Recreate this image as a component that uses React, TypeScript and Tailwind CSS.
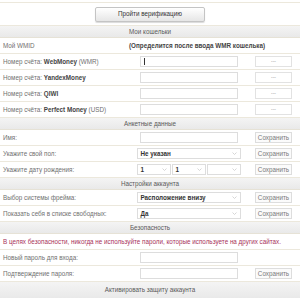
import type { ReactNode } from "react";

const font = { fontFamily: '"Liberation Sans", Arial, sans-serif' };

function Header({ children }: { children: ReactNode }) {
  return (
    <div className="flex h-[12px] items-center justify-center border-b border-[#e6e2d6] bg-gradient-to-b from-[#f4f4f4] to-[#e9e9e9] text-[6.3px] text-[#5a5a5a]">
      {children}
    </div>
  );
}

function Row({ label, children, right }: { label: ReactNode; children?: ReactNode; right?: ReactNode }) {
  return (
    <div className="flex h-[16px] items-center border-b border-[#ece8dc]">
      <div className="w-[135px] shrink-0 pl-[3px] text-[6.3px] whitespace-nowrap text-[#707070]">{label}</div>
      <div className="flex w-[107px] shrink-0 justify-center">{children}</div>
      <div className="ml-[13px] flex w-[37px] shrink-0 justify-center">{right}</div>
    </div>
  );
}

function Input({ caret }: { caret?: boolean }) {
  return (
    <div className="flex h-[11px] w-[98px] items-center border border-[#ddd] bg-white pl-[3px]">
      {caret && <div className="h-[7px] w-px bg-[#333]" />}
    </div>
  );
}

function Dash() {
  return (
    <div className="flex h-[11px] w-[37px] items-center justify-center border border-[#e2e2e2] bg-white text-[5px] text-[#999]">
      ---
    </div>
  );
}

function Save() {
  return (
    <div className="flex h-[11px] w-[37px] items-center justify-center border border-[#ddd] bg-[#fbfbfb] text-[6.3px] text-[#7a7a7a]">
      Сохранить
    </div>
  );
}

function Select({ value, w }: { value?: string; w: string }) {
  return (
    <div className={`flex h-[11px] ${w} items-center justify-between border border-[#ddd] bg-white px-[3px]`}>
      <span className="text-[6.3px] font-bold text-[#333]">{value}</span>
      <svg width="5" height="3" viewBox="0 0 5 3">
        <path d="M0.5 0.5 L2.5 2.5 L4.5 0.5" fill="none" stroke="#ccc" strokeWidth="0.8" />
      </svg>
    </div>
  );
}

export default function App() {
  return (
    <div className="h-[298px] w-[300px] overflow-hidden bg-white" style={font}>
      <div className="mt-[2px] flex h-[24px] items-center justify-center border-t border-b border-[#ece8dc]">
        <div className="flex h-[15px] w-[110px] items-center justify-center rounded-[2px] border border-[#c4c4c4] bg-gradient-to-b from-white to-[#e6e6e6] text-[6.3px] text-[#333] shadow-[0_1px_1px_rgba(0,0,0,0.15)]">
          Пройти верификацию
        </div>
      </div>

      <Header>Мои кошельки</Header>
      <div className="flex h-[16px] items-center border-b border-[#ece8dc] text-[6.3px]">
        <div className="w-[129px] shrink-0 pl-[3px] text-[#707070]">Мой WMID</div>
        <div className="font-bold whitespace-nowrap text-[#444]">(Определится после ввода WMR кошелька)</div>
      </div>
      <Row
        label={<>Номер счёта: <b className="text-[#444]">WebMoney</b> (WMR)</>}
        right={<Dash />}
      >
        <Input caret />
      </Row>
      <Row label={<>Номер счёта: <b className="text-[#444]">YandexMoney</b></>} right={<Dash />}>
        <Input />
      </Row>
      <Row label={<>Номер счёта: <b className="text-[#444]">QIWI</b></>} right={<Dash />}>
        <Input />
      </Row>
      <Row label={<>Номер счёта: <b className="text-[#444]">Perfect Money</b> (USD)</>} right={<Dash />}>
        <Input />
      </Row>

      <Header>Анкетные данные</Header>
      <Row label="Имя:" right={<Save />}>
        <Input />
      </Row>
      <Row label="Укажите свой пол:" right={<Save />}>
        <Select value="Не указан" w="w-[104px]" />
      </Row>
      <Row label="Укажите дату рождения:" right={<Save />}>
        <div className="flex gap-[1px]">
          <Select value="1" w="w-[34px]" />
          <Select value="1" w="w-[34px]" />
          <Select w="w-[34px]" />
        </div>
      </Row>

      <Header>Настройки аккаунта</Header>
      <Row label="Выбор системы фрейма:" right={<Save />}>
        <Select value="Расположение внизу" w="w-[104px]" />
      </Row>
      <Row label="Показать себя в списке свободных:" right={<Save />}>
        <Select value="Да" w="w-[104px]" />
      </Row>

      <Header>Безопасность</Header>
      <div className="flex h-[16px] items-center border-b border-[#ece8dc] pl-[3px] text-[6.3px] whitespace-nowrap text-[#a8325a]">
        В целях безопасности, никогда не используйте пароли, которые используете на других сайтах.
      </div>
      <Row label="Новый пароль для входа:">
        <Input />
      </Row>
      <Row label="Подтверждение пароля:" right={<Save />}>
        <Input />
      </Row>
      <div className="flex h-[16px] items-center justify-center bg-gradient-to-b from-[#f4f4f4] to-[#e9e9e9] text-[6.3px] text-[#5a5a5a]">
        Активировать защиту аккаунта
      </div>
    </div>
  );
}
